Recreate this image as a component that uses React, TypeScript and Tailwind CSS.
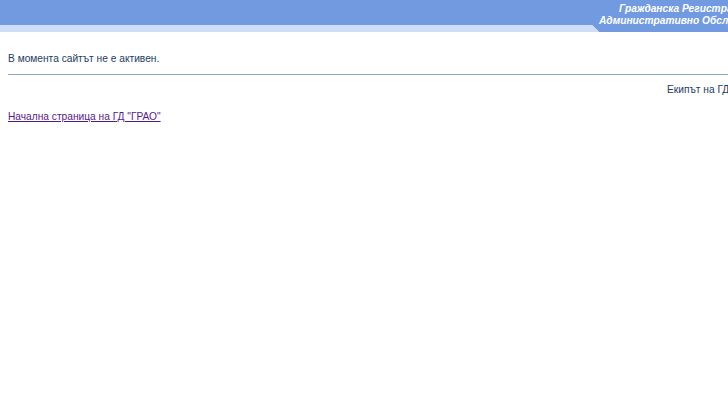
export default function App() {
    return (
        <div className="w-[728px] h-[416px] overflow-hidden bg-white font-['Liberation_Sans',Tahoma,sans-serif]">
            <div className="w-[860px]">
                <header className="relative h-[32px]">
                    <div className="h-[25px] bg-[#729ae0]" />
                    <div className="flex h-[7px]">
                        <div className="w-[592px] bg-[#d0ddf7]" />
                        <svg width="8" height="7" viewBox="0 0 8 7" className="block">
                            <polygon points="0,0 8,0 8,7 7,7" fill="#729ae0" />
                            <polygon points="0,0 7,7 0,7" fill="#d0ddf7" />
                        </svg>
                        <div className="flex-1 bg-[#729ae0]" />
                    </div>
                    <div className="absolute left-[599px] top-[3px] text-[10.2px] leading-[12px] font-bold italic text-white whitespace-nowrap">
                        <div className="pl-[20px]">Гражданска Регистрация и</div>
                        <div>Административно Обслужване</div>
                    </div>
                </header>
                <main className="px-2 pt-[20px] text-[10.2px] leading-[13px] text-[#1c3c62]">
                    <p>В момента сайтът не е активен.</p>
                    <hr className="mt-[9px] border-0 border-t border-[#8aa6cc]" />
                    <p className="mt-[8px] pl-[659px] whitespace-nowrap">Екипът на ГД "ГРАО"</p>
                    <p className="mt-[14px]">
                        <a href="#" className="underline text-[#551a8b]">
                            Начална страница на ГД "ГРАО"
                        </a>
                    </p>
                </main>
            </div>
        </div>
    );
}
